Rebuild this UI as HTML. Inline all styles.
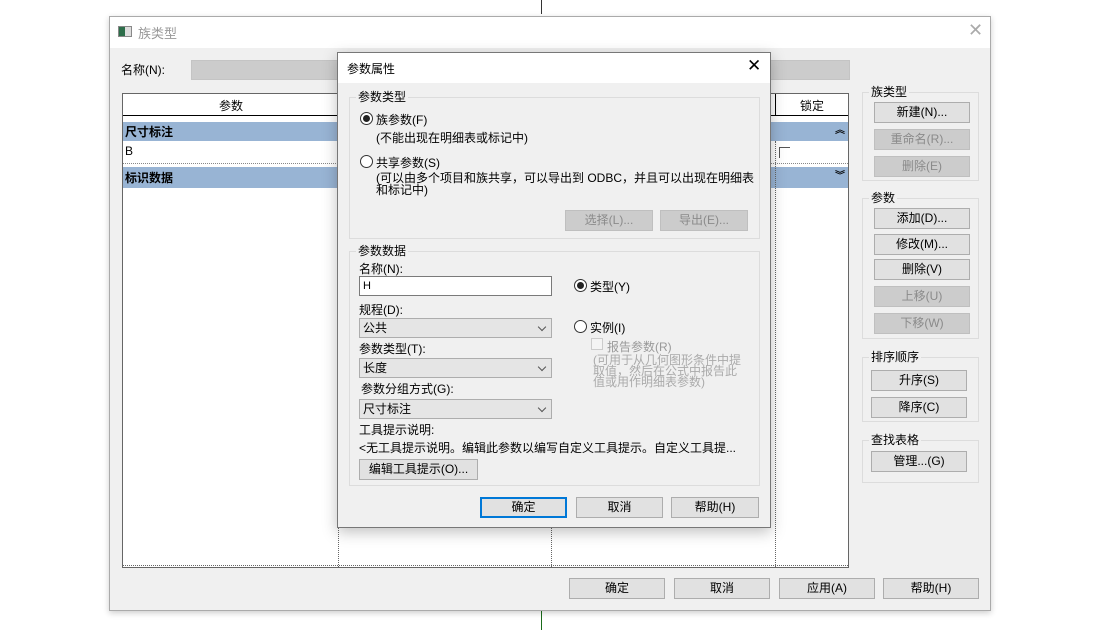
<!DOCTYPE html>
<html><head><meta charset="utf-8"><style>
*{box-sizing:border-box;margin:0;padding:0}
body{width:1120px;height:630px;background:#fff;position:relative;overflow:hidden;font-family:"Liberation Sans","Noto Sans CJK SC",sans-serif;font-size:12px;color:#000}
.a{position:absolute}
.btn{position:absolute;height:21px;background:#e1e1e1;border:1px solid #adadad;text-align:center;line-height:19px;font-size:12px}
.dis{background:#cccccc;border-color:#bfbfbf;color:#8a8a8a}
.grp{position:absolute;border:1px solid #dcdcdc}
.gl{position:absolute;background:#f0f0f0;padding:0 2px;line-height:14px;top:-8px;left:6px;font-size:12px}
.combo{position:absolute;height:20px;background:#e5e5e5;border:1px solid #adadad;line-height:18px;padding-left:3px}
.combo:after{content:"";position:absolute;right:6px;top:5px;width:5px;height:5px;border-right:1px solid #555;border-bottom:1px solid #555;transform:rotate(45deg)}
.radio{position:absolute;width:13px;height:13px;border:1px solid #333;border-radius:50%;background:#fff}
.radio.on:after{content:"";position:absolute;left:2px;top:2px;width:7px;height:7px;border-radius:50%;background:#222}
</style></head><body>
<div class="a" style="left:541px;top:0;width:1px;height:14px;background:#333"></div>
<div class="a" style="left:541px;top:610px;width:1px;height:20px;background:#1a6b1a"></div>
<!-- outer window -->
<div class="a" style="left:109px;top:16px;width:882px;height:595px;background:#f0f0f0;border:1px solid #aaa;box-shadow:0 2px 6px rgba(0,0,0,.2)">
 <div class="a" style="left:0;top:0;width:880px;height:31px;background:#fff"></div>
 <div class="a" style="left:8px;top:9px;width:14px;height:11px;border:1px solid #888;background:linear-gradient(90deg,#2d6e4a 50%,#ddd 50%)"></div>
 <div class="a" style="left:28px;top:6px;color:#999;font-size:13px">族类型</div>
 <div class="a" style="left:858px;top:3px;color:#aaa;font-size:18px">✕</div>
 <div class="a" style="left:11px;top:44px">名称(N):</div>
 <div class="a" style="left:81px;top:43px;width:659px;height:20px;background:#cccccc;border:1px solid #c4c4c4"></div>
 <!-- table -->
 <div class="a" style="left:12px;top:76px;width:727px;height:475px;background:#fff;border:1px solid #666"></div>
 <div class="a" style="left:13px;top:77px;width:725px;height:22px;border-bottom:1px solid #000;background:#fff"></div>
 <div class="a" style="left:13px;top:80px;width:216px;text-align:center">参数</div>
 <div class="a" style="left:665px;top:77px;width:1px;height:22px;background:#000"></div>
 <div class="a" style="left:666px;top:80px;width:72px;text-align:center">锁定</div>
 <div class="a" style="left:13px;top:105px;width:725px;height:19px;background:#98b4d4"></div>
 <div class="a" style="left:15px;top:106px;font-weight:bold">尺寸标注</div>
 <div class="a" style="left:725px;top:104px;font-size:10px;font-weight:bold">︽</div>
 <div class="a" style="left:15px;top:127px">B</div>
 <div class="a" style="left:669px;top:130px;width:11px;height:11px;border-left:1px solid #555;border-top:1px solid #555"></div>
 <div class="a" style="left:13px;top:146px;width:725px;border-top:1px dotted #888"></div>
 <div class="a" style="left:13px;top:150px;width:725px;height:21px;background:#98b4d4"></div>
 <div class="a" style="left:15px;top:152px;font-weight:bold">标识数据</div>
 <div class="a" style="left:725px;top:150px;font-size:10px;font-weight:bold">︾</div>
 <div class="a" style="left:228px;top:171px;height:379px;border-left:1px dotted #666"></div>
 <div class="a" style="left:441px;top:171px;height:379px;border-left:1px dotted #666"></div>
 <div class="a" style="left:665px;top:124px;height:426px;border-left:1px dotted #666"></div>
 <div class="a" style="left:13px;top:548px;width:725px;border-top:1px dotted #666"></div>
 <!-- right groups -->
 <div class="grp" style="left:752px;top:75px;width:117px;height:89px"><div class="gl">族类型</div></div>
 <div class="btn" style="left:764px;top:85px;width:96px">新建(N)...</div>
 <div class="btn dis" style="left:764px;top:112px;width:96px">重命名(R)...</div>
 <div class="btn dis" style="left:764px;top:139px;width:96px">删除(E)</div>
 <div class="grp" style="left:752px;top:181px;width:117px;height:141px"><div class="gl">参数</div></div>
 <div class="btn" style="left:764px;top:191px;width:96px">添加(D)...</div>
 <div class="btn" style="left:764px;top:217px;width:96px">修改(M)...</div>
 <div class="btn" style="left:764px;top:242px;width:96px">删除(V)</div>
 <div class="btn dis" style="left:764px;top:269px;width:96px">上移(U)</div>
 <div class="btn dis" style="left:764px;top:296px;width:96px">下移(W)</div>
 <div class="grp" style="left:752px;top:340px;width:117px;height:65px"><div class="gl">排序顺序</div></div>
 <div class="btn" style="left:761px;top:353px;width:96px">升序(S)</div>
 <div class="btn" style="left:761px;top:380px;width:96px">降序(C)</div>
 <div class="grp" style="left:752px;top:423px;width:117px;height:43px"><div class="gl">查找表格</div></div>
 <div class="btn" style="left:761px;top:434px;width:96px">管理...(G)</div>
 <div class="btn" style="left:459px;top:561px;width:96px">确定</div>
 <div class="btn" style="left:564px;top:561px;width:96px">取消</div>
 <div class="btn" style="left:669px;top:561px;width:96px">应用(A)</div>
 <div class="btn" style="left:773px;top:561px;width:96px">帮助(H)</div>
</div>
<!-- inner dialog -->
<div class="a" style="left:337px;top:52px;width:434px;height:476px;background:#f0f0f0;border:1px solid #777;box-shadow:0 4px 14px rgba(0,0,0,.25)">
 <div class="a" style="left:0;top:0;width:432px;height:30px;background:#fff"></div>
 <div class="a" style="left:9px;top:7px;font-size:12px">参数属性</div>
 <div class="a" style="left:409px;top:3px;font-size:17px">✕</div>
 <div class="grp" style="left:11px;top:44px;width:411px;height:142px"><div class="gl">参数类型</div></div>
 <div class="radio on" style="left:22px;top:59px"></div>
 <div class="a" style="left:38px;top:58px">族参数(F)</div>
 <div class="a" style="left:38px;top:76px">(不能出现在明细表或标记中)</div>
 <div class="radio" style="left:22px;top:102px"></div>
 <div class="a" style="left:38px;top:101px">共享参数(S)</div>
 <div class="a" style="left:38px;top:119px;line-height:12px">(可以由多个项目和族共享，可以导出到 ODBC，并且可以出现在明细表<br>和标记中)</div>
 <div class="btn dis" style="left:227px;top:157px;width:88px">选择(L)...</div>
 <div class="btn dis" style="left:322px;top:157px;width:88px">导出(E)...</div>
 <div class="grp" style="left:11px;top:198px;width:411px;height:235px"><div class="gl">参数数据</div></div>
 <div class="a" style="left:21px;top:207px">名称(N):</div>
 <div class="a" style="left:21px;top:223px;width:193px;height:20px;background:#fff;border:1px solid #7a7a7a;padding-left:3px;line-height:18px;font-size:11px">H</div>
 <div class="radio on" style="left:236px;top:226px"></div>
 <div class="a" style="left:252px;top:225px">类型(Y)</div>
 <div class="a" style="left:21px;top:248px">规程(D):</div>
 <div class="combo" style="left:21px;top:265px;width:193px">公共</div>
 <div class="radio" style="left:236px;top:267px"></div>
 <div class="a" style="left:252px;top:266px">实例(I)</div>
 <div class="a" style="left:253px;top:285px;width:12px;height:12px;border:1px solid #ccc;background:#f4f4f4"></div>
 <div class="a" style="left:269px;top:285px;color:#999">报告参数(R)</div>
 <div class="a" style="left:255px;top:302px;color:#aaa;line-height:11px">(可用于从几何图形条件中提<br>取值，然后在公式中报告此<br>值或用作明细表参数)</div>
 <div class="a" style="left:21px;top:287px">参数类型(T):</div>
 <div class="combo" style="left:21px;top:305px;width:193px">长度</div>
 <div class="a" style="left:23px;top:327px">参数分组方式(G):</div>
 <div class="combo" style="left:21px;top:346px;width:193px">尺寸标注</div>
 <div class="a" style="left:21px;top:368px">工具提示说明:</div>
 <div class="a" style="left:21px;top:386px">&lt;无工具提示说明。编辑此参数以编写自定义工具提示。自定义工具提...</div>
 <div class="btn" style="left:21px;top:406px;width:119px">编辑工具提示(O)...</div>
 <div class="btn" style="left:142px;top:444px;width:87px;border:2px solid #0078d7;line-height:17px">确定</div>
 <div class="btn" style="left:238px;top:444px;width:87px">取消</div>
 <div class="btn" style="left:333px;top:444px;width:88px">帮助(H)</div>
</div>
</body></html>
